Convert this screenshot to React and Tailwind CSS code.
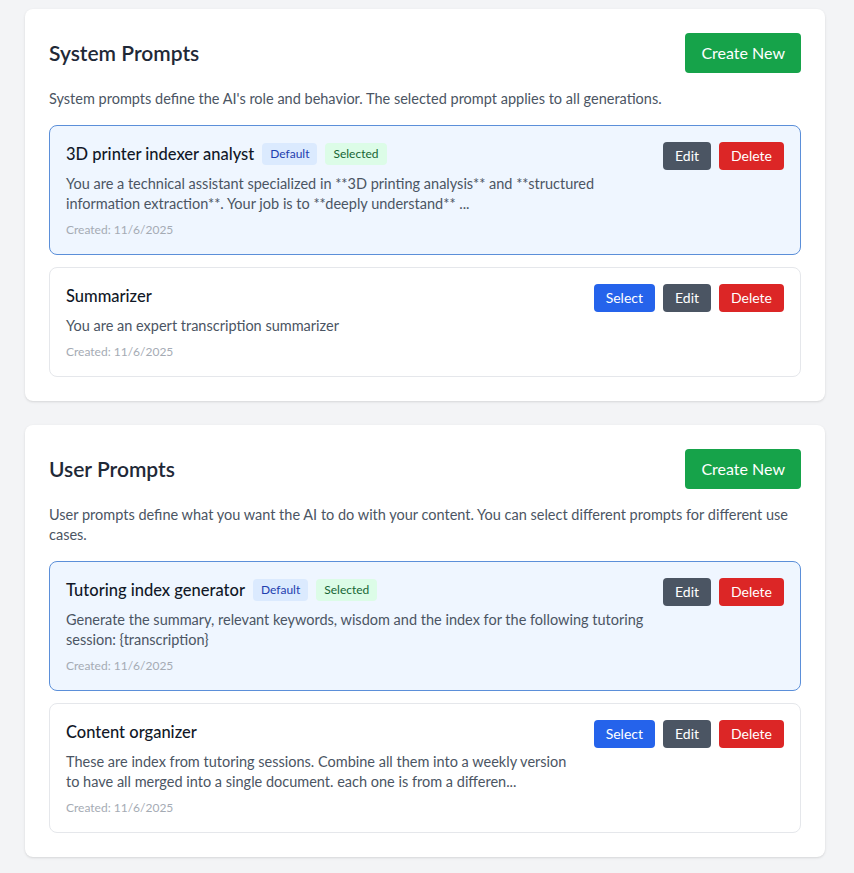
const FONT = { fontFamily: "Lato, 'Open Sans', sans-serif" };

const SECTIONS = [
  {
    title: "System Prompts",
    description:
      "System prompts define the AI's role and behavior. The selected prompt applies to all generations.",
    prompts: [
      {
        name: "3D printer indexer analyst",
        isDefault: true,
        selected: true,
        text: "You are a technical assistant specialized in **3D printing analysis** and **structured information extraction**. Your job is to **deeply understand** ...",
        created: "11/6/2025",
      },
      {
        name: "Summarizer",
        text: "You are an expert transcription summarizer",
        created: "11/6/2025",
      },
    ],
  },
  {
    title: "User Prompts",
    description:
      "User prompts define what you want the AI to do with your content. You can select different prompts for different use cases.",
    prompts: [
      {
        name: "Tutoring index generator",
        isDefault: true,
        selected: true,
        text: "Generate the summary, relevant keywords, wisdom and the index for the following tutoring session: {transcription}",
        created: "11/6/2025",
      },
      {
        name: "Content organizer",
        text: "These are index from tutoring sessions. Combine all them into a weekly version to have all merged into a single document. each one is from a differen...",
        created: "11/6/2025",
      },
    ],
  },
];

function PromptCard({ prompt }) {
  return (
    <div
      className={
        prompt.selected
          ? "rounded-lg border border-[#5b8fd9] bg-[#eff6ff] p-4"
          : "rounded-lg border border-[#e5e7eb] bg-white p-4"
      }
    >
      <div className="flex items-start justify-between gap-4">
        <div className="flex-1">
          <div className="flex items-center h-6">
            <h3 className="text-[16.5px] font-medium text-[#111827]">{prompt.name}</h3>
            {prompt.isDefault && (
              <span className="ml-2 rounded bg-[#dbeafe] px-2 py-[3px] text-xs text-[#1e40af]">
                Default
              </span>
            )}
            {prompt.selected && (
              <span className="ml-2 rounded bg-[#dcfce7] px-2 py-[3px] text-xs text-[#166534]">
                Selected
              </span>
            )}
          </div>
          <p className="mt-2 text-[14.5px] leading-5 text-[#4b5563]">{prompt.text}</p>
          <p className="mt-2 text-xs leading-4 text-[#a5abb4]">Created: {prompt.created}</p>
        </div>
        <div className="flex gap-2">
          {!prompt.selected && (
            <button className="rounded bg-[#2563eb] px-3 py-1 text-sm text-white">Select</button>
          )}
          <button className="rounded bg-[#4b5563] px-3 py-1 text-sm text-white">Edit</button>
          <button className="rounded bg-[#dc2626] px-3 py-1 text-sm text-white">Delete</button>
        </div>
      </div>
    </div>
  );
}

export default function App() {
  return (
    <div className="min-h-screen bg-[#f3f4f6] pt-[9px] pb-6 pl-[25px]" style={FONT}>
      <div className="flex w-[800px] flex-col gap-6">
        {SECTIONS.map((section) => (
          <div key={section.title} className="rounded-lg bg-white p-6 shadow">
            <div className="mb-4 flex items-center justify-between">
              <h2 className="text-[21px] font-semibold text-[#1f2937]">{section.title}</h2>
              <button className="rounded bg-[#16a34a] px-4 py-2 text-base text-white">
                Create New
              </button>
            </div>
            <p className="mb-4 text-[14.5px] leading-5 text-[#4b5563]">{section.description}</p>
            <div className="flex flex-col gap-3">
              {section.prompts.map((p) => (
                <PromptCard key={p.name} prompt={p} />
              ))}
            </div>
          </div>
        ))}
      </div>
    </div>
  );
}
